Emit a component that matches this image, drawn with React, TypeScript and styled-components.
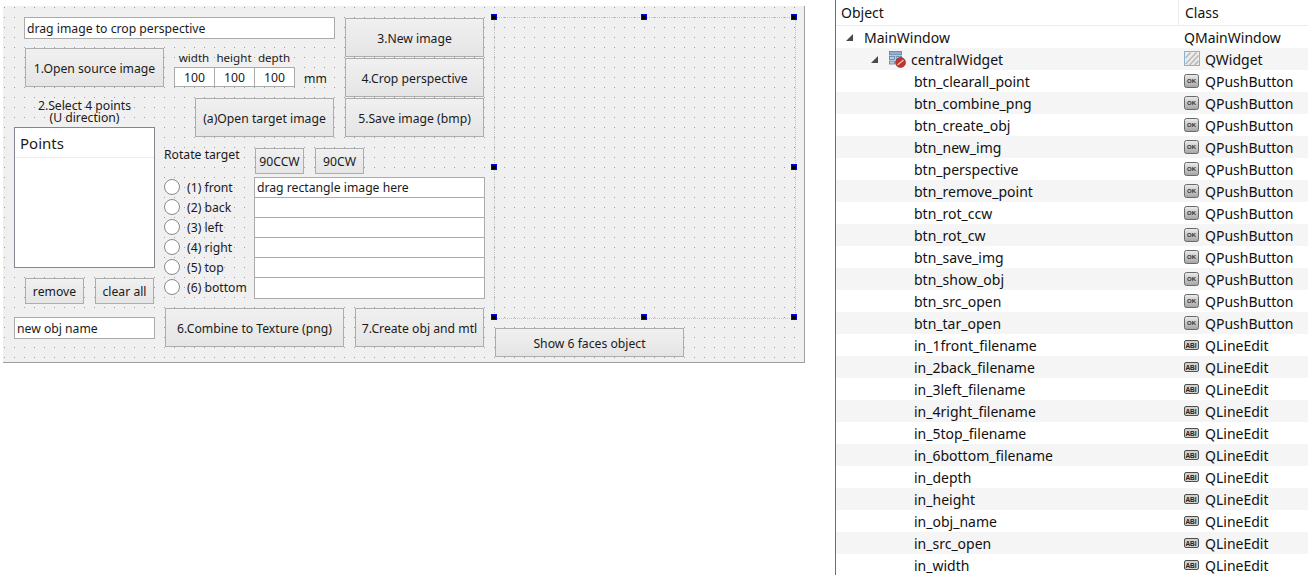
import styled, { createGlobalStyle } from "styled-components";

const GlobalStyle = createGlobalStyle`
    html, body {
        margin: 0;
        padding: 0;
        width: 1308px;
        height: 575px;
        overflow: hidden;
        background-color: #ffffff;
    }
`;

const Page = styled.div`
    display: flex;
    width: 1308px;
    height: 575px;
    overflow: hidden;
    background-color: #ffffff;
    font-family: "Noto Sans", "Liberation Sans", sans-serif;
`;

const FormArea = styled.div`
    width: 835px;
    flex-shrink: 0;
    padding: 6px 0 0 3px;
    box-sizing: border-box;
`;

const Canvas = styled.div`
    display: flex;
    gap: 9px;
    width: 802px;
    height: 357px;
    padding: 11px 0 0 11px;
    box-sizing: border-box;
    border-right: 1px solid #a0a0a0;
    border-bottom: 1px solid #a0a0a0;
    background-color: #f0f0f0;
    background-image: radial-gradient(circle at 1.5px 1.5px, #a0a0a0 0.5px, transparent 0.6px);
    background-size: 10px 10px;
    font-size: 12.2px;
    color: #1a1a1a;
`;

const FormGrid = styled.div`
    display: grid;
    width: 471px;
    grid-template-columns: 141px 190px 140px;
    grid-template-rows: 31px 50px 49px auto;
`;

const TopLine = styled.div`
    grid-column: 1 / 3;
    grid-row: 1;
    margin-left: 10px;
`;

const SourceRow = styled.div`
    grid-column: 1 / 3;
    grid-row: 2;
    display: flex;
    align-items: flex-start;
    margin-left: 11px;
`;

const TargetCell = styled.div`
    grid-column: 2;
    grid-row: 3;
    margin-left: 40px;
`;

const ButtonStack = styled.div`
    grid-column: 3;
    grid-row: 1 / 4;
    display: flex;
    flex-direction: column;
    gap: 1px;
    padding-top: 1px;
`;

const PointsColumn = styled.div`
    grid-column: 1;
    grid-row: 3 / 5;
    display: flex;
    flex-direction: column;
    padding-top: 1px;
`;

const FacesColumn = styled.div`
    grid-column: 2 / 4;
    grid-row: 4;
    display: flex;
    flex-direction: column;
    padding: 1px 0 0 9px;
`;

const PushBtn = styled.div<{ $w: number; $h: number }>`
    display: flex;
    align-items: center;
    justify-content: center;
    flex: none;
    width: ${(p) => p.$w}px;
    height: ${(p) => p.$h}px;
    padding-top: 1px;
    box-sizing: border-box;
    border: 1px solid #adadad;
    background: linear-gradient(#f0f0f0, #e5e5e5);
    white-space: nowrap;
`;

const LineEdit = styled.div<{ $w: number; $h: number; $center?: boolean }>`
    display: flex;
    align-items: center;
    justify-content: ${(p) => (p.$center ? "center" : "flex-start")};
    flex: none;
    width: ${(p) => p.$w}px;
    height: ${(p) => p.$h}px;
    padding: 0 2px;
    box-sizing: border-box;
    border: 1px solid #ababab;
    background-color: #ffffff;
    white-space: nowrap;
`;

const DimGroup = styled.div`
    display: grid;
    grid-template-columns: repeat(3, 40px);
    grid-template-rows: 19px 20px;
    margin-left: 10px;
`;

const DimLabel = styled.div`
    display: flex;
    align-items: center;
    justify-content: center;
    height: 19px;
    font-size: 11.6px;
`;

const UnitLabel = styled.div`
    margin: 22px 0 0 10px;
`;

const SelectLabel = styled.div`
    height: 26px;
    margin-bottom: 2px;
    padding-top: 1px;
    box-sizing: border-box;
    text-align: center;
    line-height: 12px;
    white-space: nowrap;
`;

const ListBox = styled.div`
    width: 141px;
    height: 141px;
    box-sizing: border-box;
    border: 1px solid #828790;
    background-color: #ffffff;
`;

const ListHeader = styled.div`
    height: 29px;
    padding-left: 5px;
    display: flex;
    align-items: center;
    font-size: 15px;
    border-bottom: 1px solid #e9eff2;
`;

const PointButtons = styled.div`
    display: flex;
    gap: 11px;
    margin: 10px 0 13px 11px;
`;

const RotateRow = styled.div`
    display: flex;
    height: 26px;
`;

const RotateLabel = styled.div`
    width: 91px;
    flex: none;
    height: 14px;
    line-height: 14px;
`;

const RotateGap = styled.div`
    width: 11px;
    flex: none;
`;

const FaceList = styled.div`
    margin-top: 3px;
`;

const FaceRow = styled.div<{ $last: boolean }>`
    display: flex;
    height: ${(p) => (p.$last ? 22 : 20)}px;
`;

const Radio = styled.div`
    width: 16px;
    height: 16px;
    flex: none;
    margin: 2px 7px 0 0;
    box-sizing: border-box;
    border: 1px solid #8a8a8a;
    border-radius: 50%;
    background-color: #ffffff;
`;

const FaceLabel = styled.div`
    width: 67px;
    flex: none;
    height: 20px;
    padding-top: 1px;
    box-sizing: border-box;
    line-height: 20px;
    white-space: nowrap;
`;

const BottomRow = styled.div`
    display: flex;
    gap: 11px;
    margin: 9px 0 0 1px;
`;

const RightColumn = styled.div`
    display: flex;
    flex-direction: column;
`;

const LayoutFrame = styled.div`
    position: relative;
    width: 300px;
    height: 300px;
    border: 1px dotted #c4c4c4;
`;

const Handle = styled.div<{ $left: number; $top: number }>`
    position: absolute;
    left: ${(p) => p.$left}%;
    top: ${(p) => p.$top}%;
    width: 6px;
    height: 6px;
    transform: translate(-4px, -4px);
    box-sizing: border-box;
    background-color: #000000;
    border: 1px solid #0000e0;
`;

const ShowRow = styled.div`
    margin: 9px 0 0 1px;
`;

const InspectorPanel = styled.div`
    flex: 1;
    border-left: 1px solid #6e6e6e;
    font-size: 14px;
    color: #111111;
`;

const HeaderRow = styled.div`
    display: flex;
    height: 25px;
    border-bottom: 1px solid #ececec;
`;

const HeaderCell = styled.div<{ $w?: number }>`
    width: ${(p) => (p.$w ? `${p.$w}px` : "auto")};
    flex: ${(p) => (p.$w ? "none" : "1")};
    box-sizing: border-box;
    padding-left: ${(p) => (p.$w ? 5 : 6)}px;
    display: flex;
    align-items: center;
    border-right: ${(p) => (p.$w ? "1px solid #ececec" : "none")};
`;

const TreeRow = styled.div<{ $alt: boolean }>`
    display: flex;
    height: 22px;
    align-items: center;
    background-color: ${(p) => (p.$alt ? "#f5f5f5" : "#ffffff")};
`;

const ObjectCell = styled.div<{ $indent: number }>`
    width: 343px;
    flex: none;
    box-sizing: border-box;
    padding-left: ${(p) => p.$indent}px;
    display: flex;
    align-items: center;
`;

const ClassCell = styled.div`
    flex: 1;
    display: flex;
    align-items: center;
    gap: 5px;
    padding-left: 5px;
`;

const Arrow = styled.svg`
    flex: none;
    margin-right: 10px;
`;

const NodeIcon = styled.svg`
    flex: none;
    margin-right: 5px;
`;

const ClassIcon = styled.svg`
    flex: none;
    display: block;
`;

const ExpandArrow = () => (
    <Arrow width="9" height="9" viewBox="0 0 9 9">
        <path d="M8 1V8H1Z" fill="#4a4a4a" />
    </Arrow>
);

const ContainerIcon = () => (
    <NodeIcon width="17" height="17" viewBox="0 0 17 17">
        <rect x="0.5" y="0.5" width="12" height="3.5" fill="#8fb0cf" stroke="#5a7fa5" strokeWidth="0.8" />
        <rect x="0.5" y="5.5" width="5" height="3" fill="#b9cde0" stroke="#5a7fa5" strokeWidth="0.8" />
        <rect x="7" y="5.5" width="5.5" height="3" fill="#b9cde0" stroke="#5a7fa5" strokeWidth="0.8" />
        <rect x="0.5" y="10" width="5" height="3" fill="#b9cde0" stroke="#5a7fa5" strokeWidth="0.8" />
        <circle cx="11.5" cy="11.5" r="5" fill="#c0352e" stroke="#8a1d18" strokeWidth="0.6" />
        <path d="M8.5 14L14.5 9" stroke="#e9c4c1" strokeWidth="1.2" />
    </NodeIcon>
);

const WidgetIcon = () => (
    <ClassIcon width="16" height="16" viewBox="0 0 16 16">
        <rect x="0.5" y="0.5" width="15" height="14" fill="#ececec" stroke="#8db2d8" />
        <path d="M1.5 7L6.5 1.5M1.5 13L12.5 1.5M5.5 14L14.5 4.5M10.5 14L14.5 10" stroke="#bdbdbd" strokeWidth="1.8" />
    </ClassIcon>
);

const ButtonIcon = () => (
    <ClassIcon width="16" height="16" viewBox="0 0 16 16">
        <defs>
            <linearGradient id="okface" x1="0" y1="0" x2="0" y2="1">
                <stop offset="0" stopColor="#ededed" />
                <stop offset="1" stopColor="#a4a4a4" />
            </linearGradient>
        </defs>
        <rect x="0.5" y="1.5" width="14" height="13" rx="2" fill="url(#okface)" stroke="#6a6a6a" />
        <text x="7.5" y="10" textAnchor="middle" fontSize="6" fontFamily="Liberation Sans" fontWeight="bold" fill="#333333">OK</text>
    </ClassIcon>
);

const EditIcon = () => (
    <ClassIcon width="16" height="16" viewBox="0 0 16 16">
        <rect x="0.5" y="3.5" width="14" height="9" rx="1.5" fill="#d0d0d0" stroke="#4f4f4f" />
        <text x="7" y="10.5" textAnchor="middle" fontSize="6.5" fontFamily="Liberation Sans" fontWeight="bold" fill="#222222">ABI</text>
    </ClassIcon>
);

const handles = [
    [0, 0], [50, 0], [100, 0],
    [0, 50], [100, 50],
    [0, 100], [50, 100], [100, 100],
];

const faces = ["(1) front", "(2) back", "(3) left", "(4) right", "(5) top", "(6) bottom"];

const dimensions = ["width", "height", "depth"];

const objects: [string, "btn" | "in"][] = [
    ["btn_clearall_point", "btn"],
    ["btn_combine_png", "btn"],
    ["btn_create_obj", "btn"],
    ["btn_new_img", "btn"],
    ["btn_perspective", "btn"],
    ["btn_remove_point", "btn"],
    ["btn_rot_ccw", "btn"],
    ["btn_rot_cw", "btn"],
    ["btn_save_img", "btn"],
    ["btn_show_obj", "btn"],
    ["btn_src_open", "btn"],
    ["btn_tar_open", "btn"],
    ["in_1front_filename", "in"],
    ["in_2back_filename", "in"],
    ["in_3left_filename", "in"],
    ["in_4right_filename", "in"],
    ["in_5top_filename", "in"],
    ["in_6bottom_filename", "in"],
    ["in_depth", "in"],
    ["in_height", "in"],
    ["in_obj_name", "in"],
    ["in_src_open", "in"],
    ["in_width", "in"],
];

export default function App() {
    return (
        <Page>
            <GlobalStyle />
            <FormArea>
                <Canvas>
                    <FormGrid>
                        <TopLine>
                            <LineEdit $w={311} $h={22}>drag image to crop perspective</LineEdit>
                        </TopLine>
                        <SourceRow>
                            <PushBtn $w={139} $h={39}>1.Open source image</PushBtn>
                            <DimGroup>
                                {dimensions.map((d) => <DimLabel key={d}>{d}</DimLabel>)}
                                {dimensions.map((d) => <LineEdit key={d} $center $w={41} $h={20}>100</LineEdit>)}
                            </DimGroup>
                            <UnitLabel>mm</UnitLabel>
                        </SourceRow>
                        <TargetCell>
                            <PushBtn $w={139} $h={39}>(a)Open target image</PushBtn>
                        </TargetCell>
                        <ButtonStack>
                            <PushBtn $w={139} $h={39}>3.New image</PushBtn>
                            <PushBtn $w={139} $h={39}>4.Crop perspective</PushBtn>
                            <PushBtn $w={139} $h={39}>5.Save image (bmp)</PushBtn>
                        </ButtonStack>

                        <PointsColumn>
                            <SelectLabel>2.Select 4 points<br />(U direction)</SelectLabel>
                            <ListBox>
                                <ListHeader>Points</ListHeader>
                            </ListBox>
                            <PointButtons>
                                <PushBtn $w={59} $h={26}>remove</PushBtn>
                                <PushBtn $w={59} $h={26}>clear all</PushBtn>
                            </PointButtons>
                            <LineEdit $w={141} $h={22}>new obj name</LineEdit>
                        </PointsColumn>

                        <FacesColumn>
                            <RotateRow>
                                <RotateLabel>Rotate target</RotateLabel>
                                <PushBtn $w={49} $h={26}>90CCW</PushBtn>
                                <RotateGap />
                                <PushBtn $w={49} $h={26}>90CW</PushBtn>
                            </RotateRow>
                            <FaceList>
                                {faces.map((face, i) => (
                                    <FaceRow key={face} $last={i === 5}>
                                        <Radio />
                                        <FaceLabel>{face}</FaceLabel>
                                        <LineEdit $w={231} $h={i === 5 ? 22 : 21}>
                                            {i === 0 ? "drag rectangle image here" : ""}
                                        </LineEdit>
                                    </FaceRow>
                                ))}
                            </FaceList>
                            <BottomRow>
                                <PushBtn $w={179} $h={39}>6.Combine to Texture (png)</PushBtn>
                                <PushBtn $w={129} $h={39}>7.Create obj and mtl</PushBtn>
                            </BottomRow>
                        </FacesColumn>
                    </FormGrid>

                    <RightColumn>
                        <LayoutFrame>
                            {handles.map(([left, top]) => <Handle key={`${left}-${top}`} $left={left} $top={top} />)}
                        </LayoutFrame>
                        <ShowRow>
                            <PushBtn $w={189} $h={29}>Show 6 faces object</PushBtn>
                        </ShowRow>
                    </RightColumn>
                </Canvas>
            </FormArea>

            <InspectorPanel>
                <HeaderRow>
                    <HeaderCell $w={343}>Object</HeaderCell>
                    <HeaderCell>Class</HeaderCell>
                </HeaderRow>
                <TreeRow $alt={false}>
                    <ObjectCell $indent={9}><ExpandArrow />MainWindow</ObjectCell>
                    <ClassCell>QMainWindow</ClassCell>
                </TreeRow>
                <TreeRow $alt>
                    <ObjectCell $indent={34}><ExpandArrow /><ContainerIcon />centralWidget</ObjectCell>
                    <ClassCell><WidgetIcon />QWidget</ClassCell>
                </TreeRow>
                {objects.map(([name, kind], i) => (
                    <TreeRow key={name} $alt={i % 2 === 1}>
                        <ObjectCell $indent={78}>{name}</ObjectCell>
                        <ClassCell>
                            {kind === "btn" ? <ButtonIcon /> : <EditIcon />}
                            {kind === "btn" ? "QPushButton" : "QLineEdit"}
                        </ClassCell>
                    </TreeRow>
                ))}
            </InspectorPanel>
        </Page>
    );
}
